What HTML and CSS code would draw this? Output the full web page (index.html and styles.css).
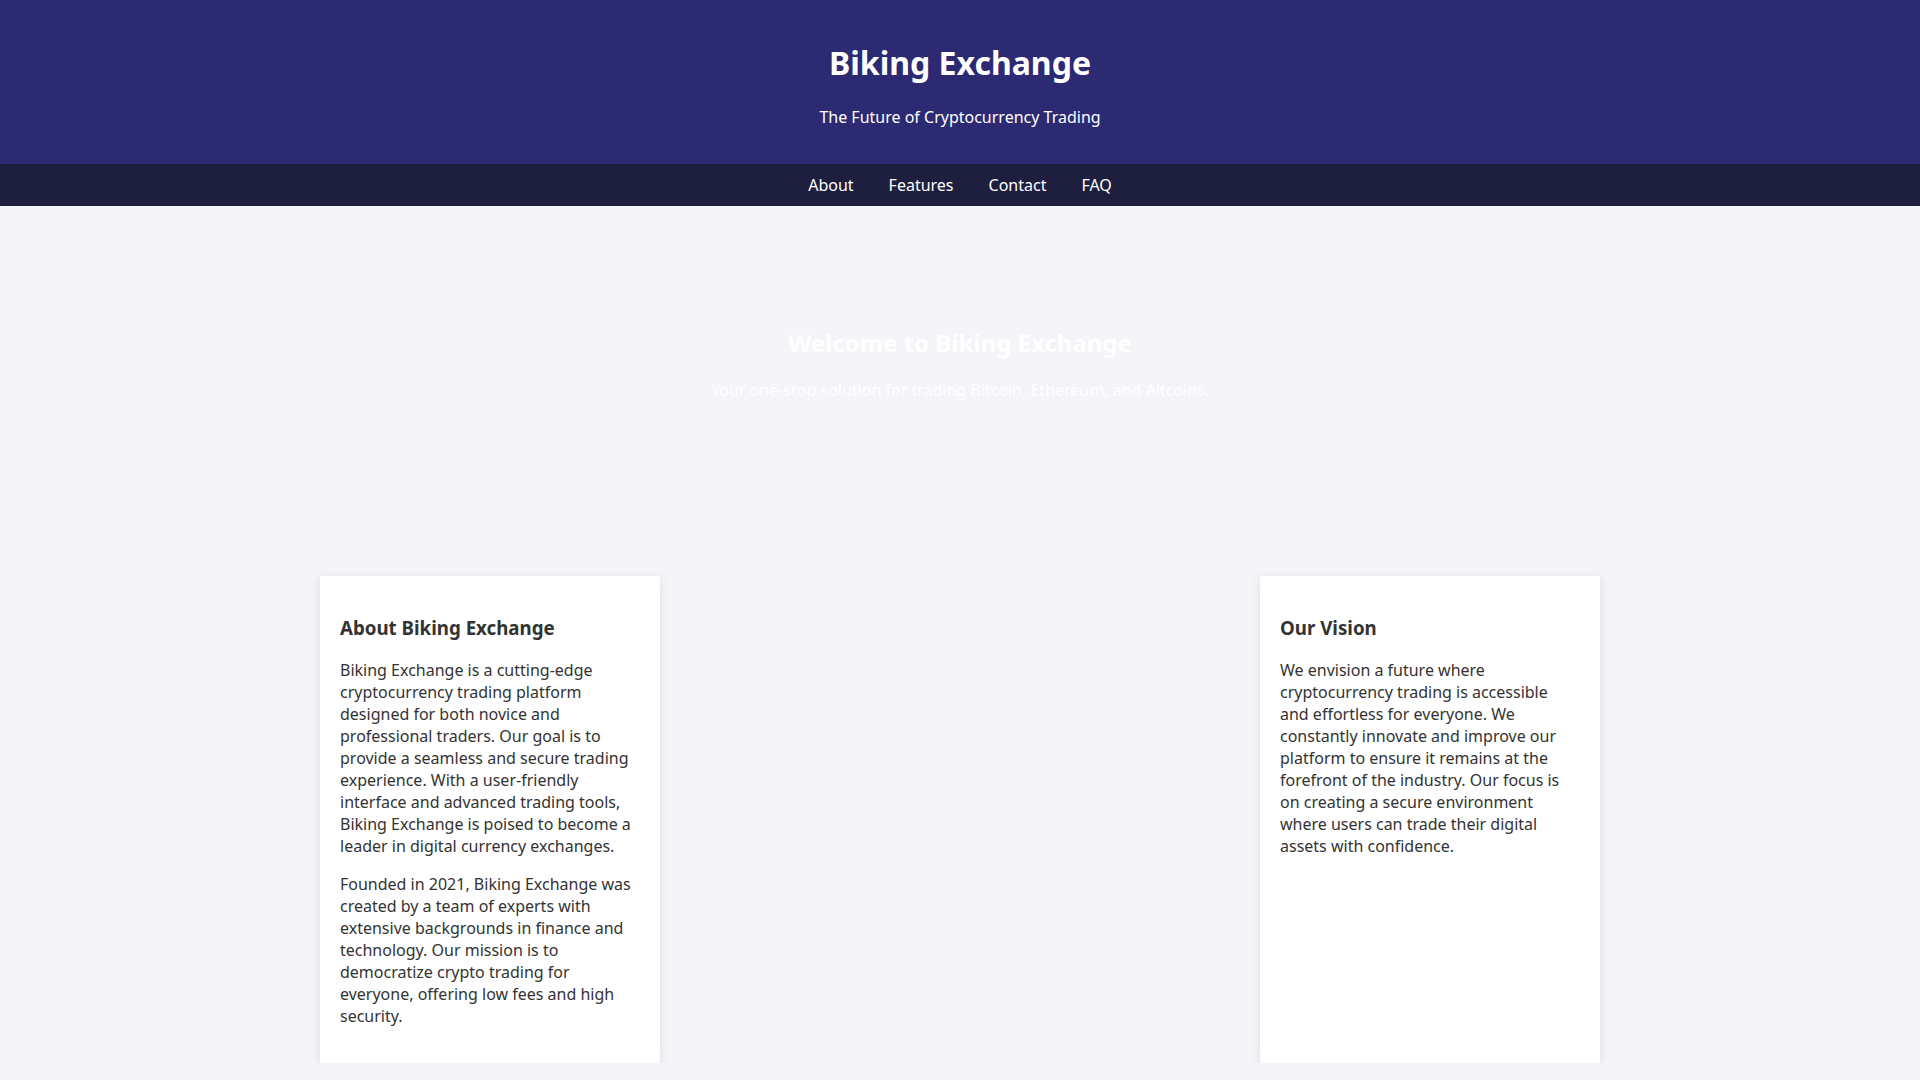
FILE: index.html
```html
<!DOCTYPE html>
<html lang="en">
<head>
    <meta charset="UTF-8">
    <meta name="viewport" content="width=device-width, initial-scale=1.0">
    <title>Biking Exchange</title>
    <link rel="stylesheet" href="styles.css">
</head>
<body>
    <header class="site-header">
        <h1>Biking Exchange</h1>
        <p>The Future of Cryptocurrency Trading</p>
    </header>

    <nav class="main-nav">
        <a href="#about">About</a>
        <a href="#features">Features</a>
        <a href="#contact">Contact</a>
        <a href="#faq">FAQ</a>
    </nav>

    <section class="hero">
        <h2>Welcome to Biking Exchange</h2>
        <p>Your one-stop solution for trading Bitcoin, Ethereum, and Altcoins.</p>
    </section>

    <main class="content">
        <div class="card" id="about">
            <h3>About Biking Exchange</h3>
            <p>Biking Exchange is a cutting-edge cryptocurrency trading platform designed for both novice and professional traders. Our goal is to provide a seamless and secure trading experience. With a user-friendly interface and advanced trading tools, Biking Exchange is poised to become a leader in digital currency exchanges.</p>
            <p>Founded in 2021, Biking Exchange was created by a team of experts with extensive backgrounds in finance and technology. Our mission is to democratize crypto trading for everyone, offering low fees and high security.</p>
        </div>

        <div class="card">
            <h3>Our Vision</h3>
            <p>We envision a future where cryptocurrency trading is accessible and effortless for everyone. We constantly innovate and improve our platform to ensure it remains at the forefront of the industry. Our focus is on creating a secure environment where users can trade their digital assets with confidence.</p>
        </div>
    </main>
</body>
</html>
```

FILE: styles.css
```css
body {
    font-family: 'Noto Sans', 'Liberation Sans', sans-serif;
    margin: 0;
    padding: 0;
    background-color: #f4f4f9;
    color: #333;
}
.site-header {
    background-color: #2b2a73;
    color: #fff;
    text-align: center;
    padding: 20px;
}
.site-header h1 {
    font-size: 32px;
    margin: 21px 0 22px;
}
.site-header p {
    margin: 16px 0;
}
.main-nav {
    background-color: #1e1e3f;
    display: flex;
    justify-content: center;
    gap: 35px;
    padding: 10px 0;
}
.main-nav a {
    color: #fff;
    text-decoration: none;
}
.hero {
    text-align: center;
    padding: 100px 20px;
    color: #fff;
}
.hero h2 {
    font-size: 24px;
    margin: 20px 0;
}
.hero p {
    margin: 16px 0;
}
.content {
    width: 1280px;
    margin: 59px auto 0;
    display: flex;
    justify-content: space-between;
}
.card {
    width: 340px;
    box-sizing: border-box;
    background-color: #fff;
    padding: 20px;
    box-shadow: 0 2px 10px rgba(0, 0, 0, 0.1);
}
.card h3 {
    font-size: 18.72px;
    margin: 19px 0;
}
.card p {
    margin: 16px 0;
}
```
